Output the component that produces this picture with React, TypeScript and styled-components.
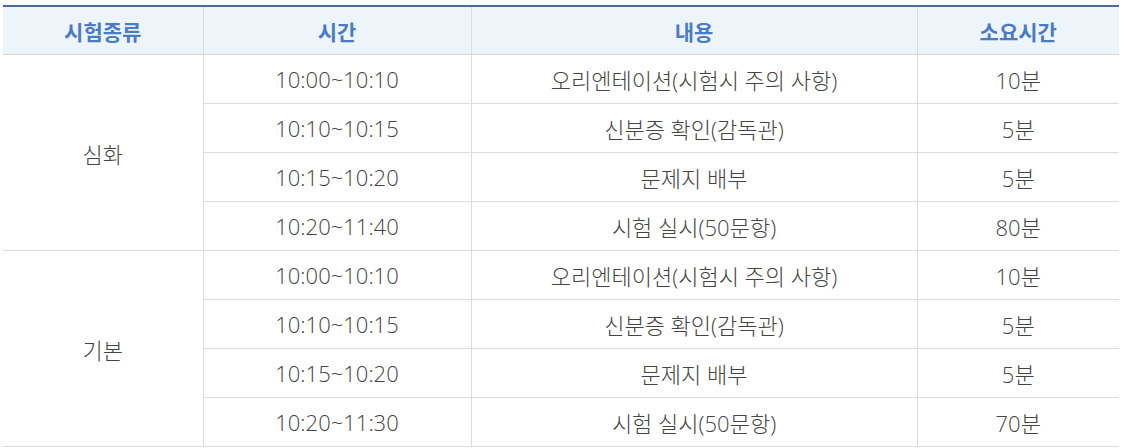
import React from "react";
import styled, { createGlobalStyle } from "styled-components";

const Global = createGlobalStyle`
  html, body { margin: 0; padding: 0; background: #fff; }
  body { font-family: "Open Sans", "Noto Sans CJK KR", sans-serif; }
`;

const Wrap = styled.div`
  padding: 5px 10px 0 3px;
`;

const Table = styled.table`
  width: 1116px;
  border-collapse: collapse;
  table-layout: fixed;
  border-top: 2px solid #4a6c9c;
  border-bottom: 1px solid #dcdcdc;
`;

const Th = styled.th<{ $first?: boolean }>`
  height: 47px;
  padding: 0;
  background: #edf5fa;
  color: #4a7bc4;
  font-family: "Noto Sans CJK KR", sans-serif;
  font-size: 21px;
  font-weight: 700;
  text-align: center;
  border-bottom: 1px solid #d6d6d6;
  border-left: ${(p) => (p.$first ? "none" : "1px solid #dcdcdc")};
`;

const Td = styled.td<{ $first?: boolean }>`
  height: 48px;
  padding: 0;
  color: #444;
  font-family: "Open Sans", "Noto Sans CJK KR", sans-serif;
  font-size: 22px;
  font-weight: 300;
  text-align: center;
  border-bottom: 1px solid #dcdcdc;
  border-left: ${(p) => (p.$first ? "none" : "1px solid #dcdcdc")};
`;

type Row = [string, string, string];

const groups: { name: string; rows: Row[] }[] = [
  {
    name: "심화",
    rows: [
      ["10:00~10:10", "오리엔테이션(시험시 주의 사항)", "10분"],
      ["10:10~10:15", "신분증 확인(감독관)", "5분"],
      ["10:15~10:20", "문제지 배부", "5분"],
      ["10:20~11:40", "시험 실시(50문항)", "80분"],
    ],
  },
  {
    name: "기본",
    rows: [
      ["10:00~10:10", "오리엔테이션(시험시 주의 사항)", "10분"],
      ["10:10~10:15", "신분증 확인(감독관)", "5분"],
      ["10:15~10:20", "문제지 배부", "5분"],
      ["10:20~11:30", "시험 실시(50문항)", "70분"],
    ],
  },
];

export default function App() {
  return (
    <>
      <Global />
      <Wrap>
        <Table>
          <colgroup>
            <col style={{ width: 200 }} />
            <col style={{ width: 268 }} />
            <col style={{ width: 446 }} />
            <col style={{ width: 202 }} />
          </colgroup>
          <thead>
            <tr>
              <Th $first>시험종류</Th>
              <Th>시간</Th>
              <Th>내용</Th>
              <Th>소요시간</Th>
            </tr>
          </thead>
          <tbody>
            {groups.map((g) =>
              g.rows.map((r, i) => (
                <tr key={g.name + i}>
                  {i === 0 && (
                    <Td $first rowSpan={g.rows.length}>
                      {g.name}
                    </Td>
                  )}
                  <Td>{r[0]}</Td>
                  <Td>{r[1]}</Td>
                  <Td>{r[2]}</Td>
                </tr>
              ))
            )}
          </tbody>
        </Table>
      </Wrap>
    </>
  );
}
